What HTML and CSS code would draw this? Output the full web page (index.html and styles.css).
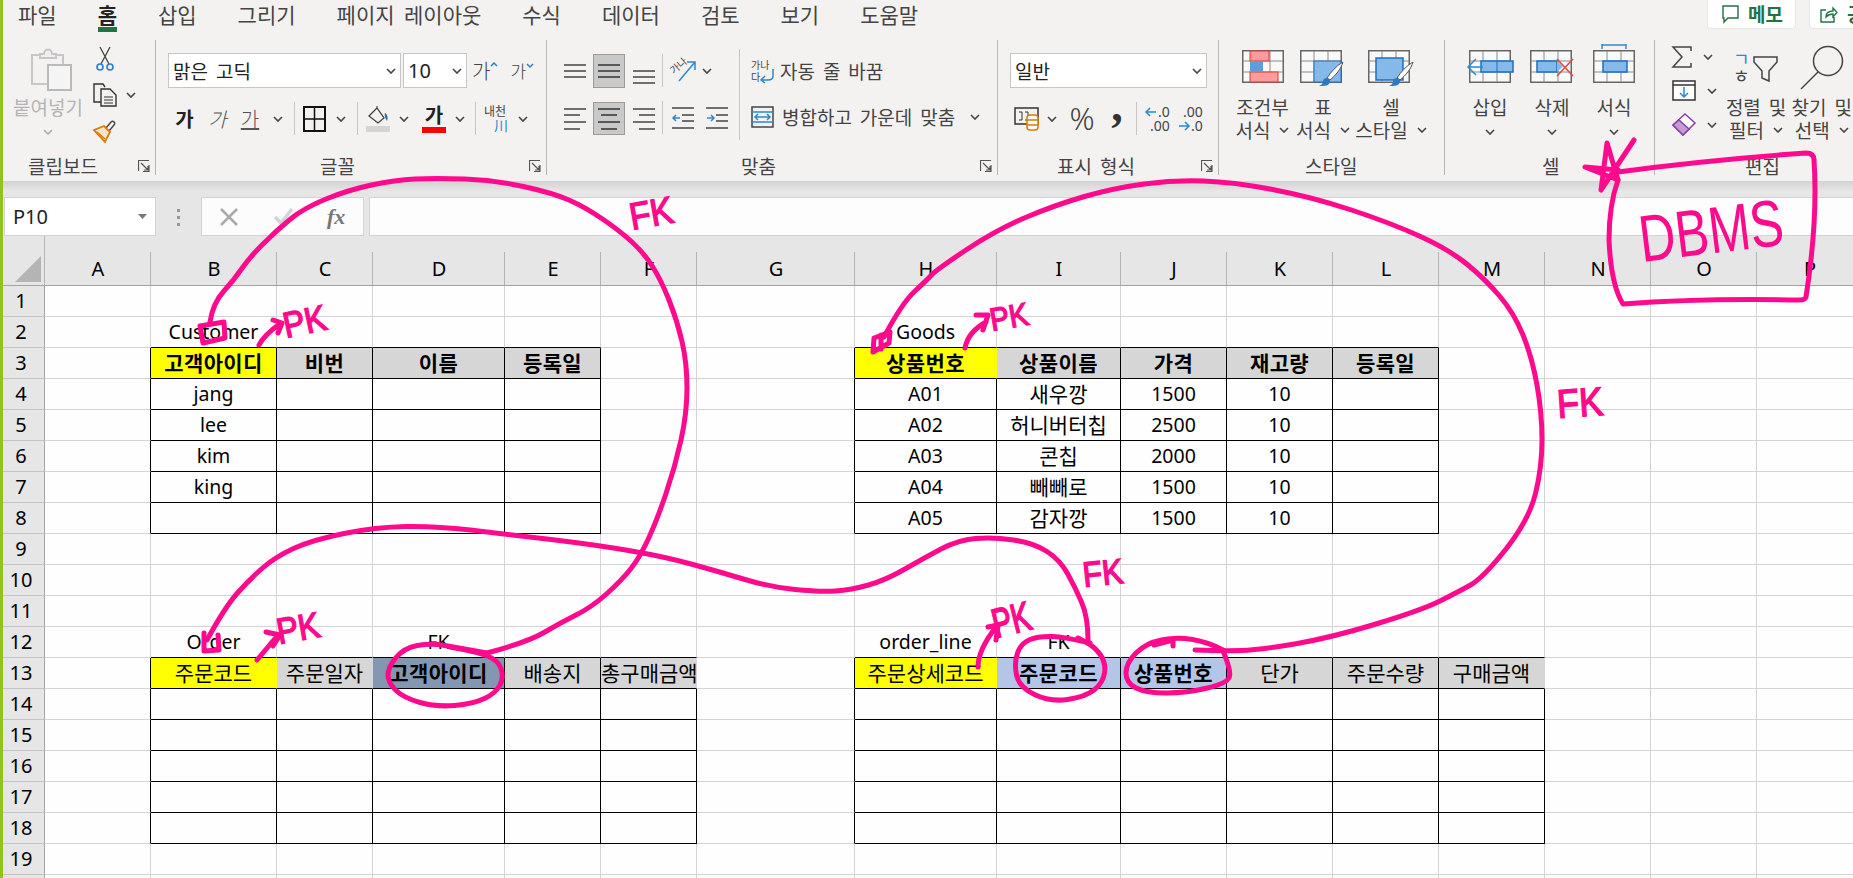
FILE: index.html
```html
<!DOCTYPE html>
<html lang="ko">
<head>
    <meta charset="UTF-8">
    <title>Excel - DB 테이블 설계</title>
    <link rel="stylesheet" href="styles.css">
</head>
<body>
<svg class="defs" width="0" height="0">
    <symbol id="chev" viewBox="0 0 10 6"><path d="M1 1l4 4 4-4" fill="none" stroke="#444" stroke-width="1.6"/></symbol>
    <symbol id="launch" viewBox="0 0 12 12"><path d="M.5 11V.5H11M11 5v6.5H5M3 3l7 7M10 6v4H6" fill="none" stroke="#555" stroke-width="1.2"/></symbol>
    <symbol id="grid" viewBox="0 0 42 33"><rect x=".75" y=".75" width="40.5" height="31.5" fill="#f9f9f9" stroke="#666" stroke-width="1.5"/><path d="M14 1v31M28 1v31M1 11h40M1 22h40" stroke="#8a8a8a" fill="none"/></symbol>
</svg>

<div class="app">
    <nav class="tabs">
        <span class="tab">파일</span>
        <span class="tab active">홈</span>
        <span class="tab">삽입</span>
        <span class="tab">그리기</span>
        <span class="tab">페이지 레이아웃</span>
        <span class="tab">수식</span>
        <span class="tab">데이터</span>
        <span class="tab">검토</span>
        <span class="tab">보기</span>
        <span class="tab">도움말</span>
        <div class="tab-actions">
            <span class="action memo">
                <svg width="17" height="18" viewBox="0 0 17 18" fill="none" stroke="#217346" stroke-width="1.4"><path d="M1 1h15v12H6l-4 4v-4H1z"/></svg>
                메모
            </span>
            <span class="action share">
                <svg width="18" height="18" viewBox="0 0 18 18" fill="none" stroke="#217346" stroke-width="1.4"><path d="M6 5H1v12h13v-5M6 12c0-4 3-6 7-6V3l4 4.500-4 4.500V9c-3 0-5 1-7 3z"/></svg>
                공유
            </span>
        </div>
    </nav>

    <section class="ribbon">
        <!-- 클립보드 -->
        <div class="group g-clip">
            <div class="g-body clip-body">
                <div class="paste">
                    <svg class="paste-icon" width="41" height="44" viewBox="0 0 41 44" fill="none" stroke="#c6c6c6" stroke-width="2"><path d="M17 37H1V8h8M25 8h7v9"/><path d="M9 11V7h4c0-6 8-6 8 0h4v4z" fill="#efefef"/><rect x="17" y="18" width="23" height="25" fill="#f4f4f4" stroke="#b9b9b9"/></svg>
                    <span class="paste-label">붙여넣기</span>
                    <svg class="chev c-muted" width="10" height="6"><use href="#chev"/></svg>
                </div>
                <div class="clip-tools">
                    <svg class="t-cut" width="18" height="24" viewBox="0 0 18 24" fill="none"><path d="M4 0l9 17M14 0L5 17" stroke="#444" stroke-width="1.3"/><circle cx="4" cy="20" r="3" stroke="#2b7cd3" stroke-width="1.6"/><circle cx="14" cy="20" r="3" stroke="#2b7cd3" stroke-width="1.6"/></svg>
                    <span class="t-copy">
                        <svg width="24" height="24" viewBox="0 0 24 24" fill="none" stroke="#333" stroke-width="1.4"><path d="M8 19H1V1h9l2 3"/><path d="M8 6h9l6 6v11H8z" fill="#f3f2f1"/><path d="M11 14h9M11 17h9M11 20h9" stroke-width="1"/></svg>
                        <svg class="chev" width="10" height="6"><use href="#chev"/></svg>
                    </span>
                    <svg class="t-paint" width="24" height="23" viewBox="0 0 24 23" fill="none"><path d="M13 9l5-6c2-2 5 1 3 3l-5 6" stroke="#444" stroke-width="1.4"/><path d="M1 11l10-4 6 6-5 10z" fill="#fbe3c6" stroke="#dc7a00" stroke-width="1.8"/><path d="M4 13l8 7" stroke="#dc7a00" stroke-width="1.5"/></svg>
                </div>
            </div>
            <div class="g-label"><span>클립보드</span><svg class="launcher" width="12" height="12"><use href="#launch"/></svg></div>
        </div>

        <!-- 글꼴 -->
        <div class="group g-font">
            <div class="g-body font-body">
                <div class="row font-row1">
                    <div class="combo combo-font"><span>맑은 고딕</span><svg width="10" height="6"><use href="#chev"/></svg></div>
                    <div class="combo combo-size"><span>10</span><svg width="10" height="6"><use href="#chev"/></svg></div>
                    <span class="grow">가<svg width="8" height="6" viewBox="0 0 8 6" fill="none" stroke="#2b7cd3" stroke-width="1.5"><path d="M1 5l3-3 3 3"/></svg></span>
                    <span class="shrink">가<svg width="8" height="6" viewBox="0 0 8 6" fill="none" stroke="#2b7cd3" stroke-width="1.5"><path d="M1 1l3 3 3-3"/></svg></span>
                </div>
                <div class="slots font-row2">
                    <b class="ch">가</b>
                    <i class="ch light">가</i>
                    <u class="ch light">가</u>
                    <svg width="10" height="6"><use href="#chev"/></svg>
                    <span class="vsep"></span>
                    <svg width="23" height="26" viewBox="0 0 23 26" fill="none" stroke="#111" stroke-width="2"><rect x="1" y="1" width="21" height="24"/><path d="M11.500 1v24M1 13h21" stroke-width="1.500"/></svg>
                    <svg width="10" height="6"><use href="#chev"/></svg>
                    <span class="vsep"></span>
                    <svg width="24" height="25" viewBox="0 0 24 25" fill="none"><path d="M3 10l8-8 7 10-6 5z" stroke="#444" stroke-width="1.300"/><path d="M11 2V0" stroke="#444"/><path d="M19 7c3 2 3 6 2 8-1-2-3-5-2-8z" fill="#1f6cb5"/><rect y="20" width="24" height="6" fill="#d4d4d4"/></svg>
                    <svg width="10" height="6"><use href="#chev"/></svg>
                    <span class="fcolor"><b>가</b><em></em></span>
                    <svg width="10" height="6"><use href="#chev"/></svg>
                    <span class="vsep"></span>
                    <span class="phon">내천<em>川</em></span>
                    <svg width="10" height="6"><use href="#chev"/></svg>
                </div>
            </div>
            <div class="g-label"><span>글꼴</span><svg class="launcher" width="12" height="12"><use href="#launch"/></svg></div>
        </div>

        <!-- 맞춤 -->
        <div class="group g-align">
            <div class="g-body align-body">
                <div class="align-grid">
                    <svg width="22" height="15" viewBox="0 0 22 15" stroke="#444" stroke-width="1.500"><path d="M0 1h22M0 7h22M0 13h22"/></svg>
                    <span class="sel"><svg width="22" height="15" viewBox="0 0 22 15" stroke="#333" stroke-width="1.500"><path d="M0 1h22M0 7h22M0 13h22"/></svg></span>
                    <svg class="a-low" width="22" height="15" viewBox="0 0 22 15" stroke="#444" stroke-width="1.500"><path d="M0 1h22M0 7h22M0 13h22"/></svg>
                    <svg width="22" height="22" viewBox="0 0 22 22" stroke="#444" stroke-width="1.500"><path d="M0 1h22M0 7h16M0 14h22M0 21h16"/></svg>
                    <span class="sel"><svg width="22" height="22" viewBox="0 0 22 22" stroke="#333" stroke-width="1.500"><path d="M0 1h22M3 7h16M0 14h22M3 21h16"/></svg></span>
                    <svg width="22" height="22" viewBox="0 0 22 22" stroke="#444" stroke-width="1.500"><path d="M0 1h22M6 7h16M0 14h22M6 21h16"/></svg>
                </div>
                <div class="align-mid">
                    <div class="mid-cell">
                        <svg class="m-orient" width="26" height="24" viewBox="0 0 26 24" fill="none"><text x="0" y="12" class="svg-small" transform="rotate(-40 6 10)">가나</text><path d="M8 22L24 3M16 3h8v8" stroke="#2b8ad0" stroke-width="1.500"/></svg>
                        <svg width="10" height="6"><use href="#chev"/></svg>
                    </div>
                    <div class="mid-cell">
                        <svg class="m-ind" width="22" height="22" viewBox="0 0 22 22" fill="none"><path d="M0 1h22M10 8h12M10 14h12M0 21h22" stroke="#444" stroke-width="1.500"/><path d="M8 11H1M4 8l-3 3 3 3" stroke="#2b8ad0" stroke-width="1.500"/></svg>
                        <svg class="m-ind" width="22" height="22" viewBox="0 0 22 22" fill="none"><path d="M0 1h22M10 8h12M10 14h12M0 21h22" stroke="#444" stroke-width="1.500"/><path d="M1 11h7M5 8l3 3-3 3" stroke="#2b8ad0" stroke-width="1.500"/></svg>
                    </div>
                </div>
                <div class="align-wide">
                    <div class="wide-row">
                        <svg width="24" height="24" viewBox="0 0 24 24" fill="none"><text x="0" y="10" class="svg-small">가나</text><text x="0" y="22" class="svg-small">다</text><path d="M22 10v7c0 3-2 4-5 4h-6M14 17l-4 4 4 3" stroke="#2b8ad0" stroke-width="1.500"/></svg>
                        <span>자동 줄 바꿈</span>
                    </div>
                    <div class="wide-row">
                        <svg width="23" height="22" viewBox="0 0 23 22" fill="none"><rect x="1" y="1" width="21" height="20" stroke="#444" stroke-width="1.500"/><path d="M1 6h21M1 16h21" stroke="#2b8ad0" stroke-width="1.500"/><path d="M4 11h15M7 8l-3 3 3 3M16 8l3 3-3 3" stroke="#2b8ad0" stroke-width="1.500"/></svg>
                        <span>병합하고 가운데 맞춤</span>
                        <svg class="wide-chev" width="10" height="6"><use href="#chev"/></svg>
                    </div>
                </div>
            </div>
            <div class="g-label"><span>맞춤</span><svg class="launcher" width="12" height="12"><use href="#launch"/></svg></div>
        </div>

        <!-- 표시 형식 -->
        <div class="group g-num">
            <div class="g-body num-body">
                <div class="combo combo-num"><span>일반</span><svg width="10" height="6"><use href="#chev"/></svg></div>
                <div class="slots num-row2">
                    <svg width="25" height="24" viewBox="0 0 25 24" fill="none"><rect x="1" y="1" width="23" height="16" stroke="#333" stroke-width="1.500"/><path d="M5 5h3v8H5M11 5h3v8h-3" stroke="#333"/><rect x="13" y="8" width="11" height="15" rx="3" fill="#fff" stroke="#dc7a00" stroke-width="1.500"/><path d="M13 13h11M13 18h11" stroke="#dc7a00" stroke-width="1.500"/></svg>
                    <svg width="10" height="6"><use href="#chev"/></svg>
                    <span class="pct">%</span>
                    <span class="comma">,</span>
                    <span class="vsep"></span>
                    <svg width="25" height="26" viewBox="0 0 25 26" fill="none"><path d="M11 6H1M5 2L1 6l4 4" stroke="#2b8ad0" stroke-width="1.500"/><text x="13" y="11" class="svg-num">.0</text><text x="5" y="25" class="svg-num">.00</text></svg>
                    <svg width="25" height="26" viewBox="0 0 25 26" fill="none"><path d="M1 20h10M7 16l4 4-4 4" stroke="#2b8ad0" stroke-width="1.500"/><text x="5" y="11" class="svg-num">.00</text><text x="13" y="25" class="svg-num">.0</text></svg>
                </div>
            </div>
            <div class="g-label"><span>표시 형식</span><svg class="launcher" width="12" height="12"><use href="#launch"/></svg></div>
        </div>

        <!-- 스타일 -->
        <div class="group g-style">
            <div class="g-body bigs style-body">
                <div class="big">
                    <div class="big-icon"><svg width="42" height="33" viewBox="0 0 42 33"><use href="#grid" width="42" height="33"/><rect x="8" y="1" width="19" height="10" fill="#ff9a9e" stroke="#d83b2b"/><rect x="8" y="22" width="28" height="10" fill="#ff9a9e" stroke="#d83b2b"/><rect x="8" y="11" width="13" height="11" fill="#5c9fdc"/></svg></div>
                    <span>조건부</span>
                    <span>서식 <svg width="10" height="6"><use href="#chev"/></svg></span>
                </div>
                <div class="big">
                    <div class="big-icon"><svg width="46" height="33" viewBox="0 0 46 33"><use href="#grid" width="42" height="33"/><rect x="14" y="11" width="27" height="21" fill="#84b9ea" stroke="#1e6fbf"/><path d="M43 12c-2 7-7 13-13 18l-3-2c4-6 9-12 16-16z" fill="#fff" stroke="#555"/><path d="M27 28c3 1 4 3 2 6-2 2-6 2-10 2 3-1 4-3 4-5 0-2 2-3 4-3z" fill="#2e78c0"/></svg></div>
                    <span>표</span>
                    <span>서식 <svg width="10" height="6"><use href="#chev"/></svg></span>
                </div>
                <div class="big">
                    <div class="big-icon"><svg width="46" height="33" viewBox="0 0 46 33"><use href="#grid" width="42" height="33"/><rect x="8" y="8" width="27" height="22" fill="#84b9ea" stroke="#1e6fbf" stroke-width="1.500"/><path d="M45 12c-2 7-7 13-13 18l-3-2c4-6 9-12 16-16z" fill="#fff" stroke="#555"/><path d="M29 28c3 1 4 3 2 6-2 2-6 2-10 2 3-1 4-3 4-5 0-2 2-3 4-3z" fill="#2e78c0"/></svg></div>
                    <span>셀</span>
                    <span>스타일 <svg width="10" height="6"><use href="#chev"/></svg></span>
                </div>
            </div>
            <div class="g-label"><span>스타일</span></div>
        </div>

        <!-- 셀 -->
        <div class="group g-cell">
            <div class="g-body bigs cell-body">
                <div class="big">
                    <div class="big-icon"><svg width="46" height="33" viewBox="0 0 46 33"><g transform="translate(2 0)"><use href="#grid" width="42" height="33"/></g><rect x="14" y="11" width="32" height="11" fill="#84b9ea" stroke="#1e6fbf" stroke-width="1.500"/><path d="M30 11v11" stroke="#1e6fbf"/><path d="M16 17H2M9 9l-8 8 8 8" fill="none" stroke="#2b8ad0" stroke-width="1.500"/></svg></div>
                    <span>삽입</span>
                    <svg width="10" height="6"><use href="#chev"/></svg>
                </div>
                <div class="big">
                    <div class="big-icon"><svg width="44" height="33" viewBox="0 0 44 33"><use href="#grid" width="42" height="33"/><rect x="7" y="11" width="20" height="11" fill="#84b9ea" stroke="#1e6fbf" stroke-width="1.500"/><path d="M27 11l6 5.500-6 5.500z" fill="#84b9ea"/><path d="M27 9l16 17M43 9L27 26" stroke="#e5493a" stroke-width="1.600" fill="none"/></svg></div>
                    <span>삭제</span>
                    <svg width="10" height="6"><use href="#chev"/></svg>
                </div>
                <div class="big">
                    <div class="big-icon"><svg width="42" height="40" viewBox="0 0 42 40"><path d="M9 1h24M9 0v5M33 0v5" transform="translate(0 1)" fill="none" stroke="#2b8ad0" stroke-width="1.500"/><g transform="translate(0 7)"><use href="#grid" width="42" height="33"/><rect x="10" y="11" width="24" height="11" fill="#84b9ea" stroke="#1e6fbf" stroke-width="1.500"/></g></svg></div>
                    <span>서식</span>
                    <svg width="10" height="6"><use href="#chev"/></svg>
                </div>
            </div>
            <div class="g-label"><span>셀</span></div>
        </div>

        <!-- 편집 -->
        <div class="group g-edit">
            <div class="g-body edit-body">
                <div class="edit-tools">
                    <span><svg width="20" height="22" viewBox="0 0 20 22" fill="none" stroke="#444" stroke-width="1.500"><path d="M19 5V1H1l9 10-9 10h18v-4"/></svg><svg width="10" height="6"><use href="#chev"/></svg></span>
                    <span><svg width="24" height="21" viewBox="0 0 24 21" fill="none"><rect x="1" y="1" width="22" height="19" fill="#fff" stroke="#333" stroke-width="1.500"/><path d="M1 5h22" stroke="#333" stroke-width="1.500"/><path d="M12 7v10M8 13l4 4 4-4" stroke="#2b8ad0" stroke-width="1.500"/></svg><svg width="10" height="6"><use href="#chev"/></svg></span>
                    <span><svg width="24" height="23" viewBox="0 0 24 23"><path d="M1 12L13 1l10 9-12 12z" fill="#fff" stroke="#8a3fa8" stroke-width="1.500"/><path d="M1 12l6-5 10 9-6 6z" fill="#c79bd6" stroke="#8a3fa8" stroke-width="1.500"/></svg><svg width="10" height="6"><use href="#chev"/></svg></span>
                </div>
                <div class="big big-sort">
                    <div class="big-icon"><svg width="44" height="33" viewBox="0 0 44 33" fill="none"><text x="-1" y="16" class="svg-sort blue">ㄱ</text><text x="-1" y="33" class="svg-sort">ㅎ</text><path d="M20 7h23v5l-8 9v10l-7-3v-7l-8-9z" stroke="#444" stroke-width="1.500"/></svg></div>
                    <span>정렬 및</span>
                    <span>필터 <svg width="10" height="6"><use href="#chev"/></svg></span>
                </div>
                <div class="big big-find">
                    <div class="big-icon tall"><svg width="44" height="43" viewBox="0 0 44 43" fill="none" stroke="#444" stroke-width="1.500"><circle cx="28" cy="15" r="14.500"/><path d="M18 26L1 43"/></svg></div>
                    <span>찾기 및</span>
                    <span>선택 <svg width="10" height="6"><use href="#chev"/></svg></span>
                </div>
            </div>
            <div class="g-label"><span>편집</span></div>
        </div>
    </section>

    <div class="formula">
        <div class="namebox"><span>P10</span><svg width="9" height="5" viewBox="0 0 9 5"><path d="M0 0h9L4.500 5z" fill="#777"/></svg></div>
        <div class="dots"><i></i><i></i><i></i></div>
        <div class="fx-box">
            <svg width="18" height="18" viewBox="0 0 18 18" fill="none" stroke="#aaa" stroke-width="2.500"><path d="M1 1l16 16M17 1L1 17"/></svg>
            <svg width="19" height="17" viewBox="0 0 19 17" fill="none" stroke="#d4d4d4" stroke-width="3.500"><path d="M1 9l6 6L18 1"/></svg>
            <span class="fx">fx</span>
        </div>
        <div class="fx-input"></div>
    </div>

    <div class="sheet-wrap">
        <table class="sheet">
            <colgroup>
                <col class="c-gut"><col class="c-106"><col class="c-b"><col class="c-96"><col class="c-d"><col class="c-96"><col class="c-96"><col class="c-g"><col class="c-h"><col class="c-i"><col class="c-106"><col class="c-106"><col class="c-106"><col class="c-106"><col class="c-106"><col class="c-106"><col class="c-106">
            </colgroup>
            <thead>
                <tr>
                    <th class="corner"><svg width="26" height="26" viewBox="0 0 26 26"><path d="M26 0v26H0z" fill="#b4b4b4"/></svg></th>
                    <th>A</th><th>B</th><th>C</th><th>D</th><th>E</th><th>F</th><th>G</th><th>H</th><th>I</th><th>J</th><th>K</th><th>L</th><th>M</th><th>N</th><th>O</th><th>P</th>
                </tr>
            </thead>
            <tbody>
                <tr><th>1</th><td></td><td></td><td></td><td></td><td></td><td></td><td></td><td></td><td></td><td></td><td></td><td></td><td></td><td></td><td></td><td></td></tr>
                <tr><th>2</th><td></td><td class="u en">Customer</td><td class="u"></td><td class="u"></td><td class="u"></td><td></td><td></td><td class="u en">Goods</td><td class="u"></td><td class="u"></td><td class="u"></td><td class="u"></td><td></td><td></td><td></td><td></td></tr>
                <tr><th>3</th><td class="l"></td><td class="t pk b">고객아이디</td><td class="t gr b">비번</td><td class="t gr b">이름</td><td class="t gr b">등록일</td><td></td><td class="l"></td><td class="t pk b nr">상품번호</td><td class="t gr b">상품이름</td><td class="t gr b">가격</td><td class="t gr b">재고량</td><td class="t gr b">등록일</td><td></td><td></td><td></td><td></td></tr>
                <tr><th>4</th><td class="l"></td><td class="t en">jang</td><td class="t"></td><td class="t"></td><td class="t"></td><td></td><td class="l"></td><td class="t en">A01</td><td class="t">새우깡</td><td class="t en">1500</td><td class="t en">10</td><td class="t"></td><td></td><td></td><td></td><td></td></tr>
                <tr><th>5</th><td class="l"></td><td class="t en">lee</td><td class="t"></td><td class="t"></td><td class="t"></td><td></td><td class="l"></td><td class="t en">A02</td><td class="t">허니버터칩</td><td class="t en">2500</td><td class="t en">10</td><td class="t"></td><td></td><td></td><td></td><td></td></tr>
                <tr><th>6</th><td class="l"></td><td class="t en">kim</td><td class="t"></td><td class="t"></td><td class="t"></td><td></td><td class="l"></td><td class="t en">A03</td><td class="t">콘칩</td><td class="t en">2000</td><td class="t en">10</td><td class="t"></td><td></td><td></td><td></td><td></td></tr>
                <tr><th>7</th><td class="l"></td><td class="t en">king</td><td class="t"></td><td class="t"></td><td class="t"></td><td></td><td class="l"></td><td class="t en">A04</td><td class="t">빼빼로</td><td class="t en">1500</td><td class="t en">10</td><td class="t"></td><td></td><td></td><td></td><td></td></tr>
                <tr><th>8</th><td class="l"></td><td class="t"></td><td class="t"></td><td class="t"></td><td class="t"></td><td></td><td class="l"></td><td class="t en">A05</td><td class="t">감자깡</td><td class="t en">1500</td><td class="t en">10</td><td class="t"></td><td></td><td></td><td></td><td></td></tr>
                <tr><th>9</th><td></td><td></td><td></td><td></td><td></td><td></td><td></td><td></td><td></td><td></td><td></td><td></td><td></td><td></td><td></td><td></td></tr>
                <tr><th>10</th><td></td><td></td><td></td><td></td><td></td><td></td><td></td><td></td><td></td><td></td><td></td><td></td><td></td><td></td><td></td><td></td></tr>
                <tr><th>11</th><td></td><td></td><td></td><td></td><td></td><td></td><td></td><td></td><td></td><td></td><td></td><td></td><td></td><td></td><td></td><td></td></tr>
                <tr><th>12</th><td></td><td class="u en">Order</td><td class="u"></td><td class="u en">FK</td><td class="u"></td><td class="u"></td><td></td><td class="u en">order_line</td><td class="u en">FK</td><td class="u"></td><td class="u"></td><td class="u"></td><td class="u"></td><td></td><td></td><td></td></tr>
                <tr><th>13</th><td class="l"></td><td class="t pk nr">주문코드</td><td class="t gr nr">주문일자</td><td class="t fk-dark b">고객아이디</td><td class="t gr">배송지</td><td class="t gr nr clip">총구매금액</td><td class="l"></td><td class="t pk nr">주문상세코드</td><td class="t fk-light b">주문코드</td><td class="t fk-light b">상품번호</td><td class="t gr">단가</td><td class="t gr">주문수량</td><td class="t gr nr">구매금액</td><td></td><td></td><td></td></tr>
                <tr><th>14</th><td class="l"></td><td class="t"></td><td class="t"></td><td class="t"></td><td class="t"></td><td class="t"></td><td class="l"></td><td class="t"></td><td class="t"></td><td class="t"></td><td class="t"></td><td class="t"></td><td class="t"></td><td></td><td></td><td></td></tr>
                <tr><th>15</th><td class="l"></td><td class="t"></td><td class="t"></td><td class="t"></td><td class="t"></td><td class="t"></td><td class="l"></td><td class="t"></td><td class="t"></td><td class="t"></td><td class="t"></td><td class="t"></td><td class="t"></td><td></td><td></td><td></td></tr>
                <tr><th>16</th><td class="l"></td><td class="t"></td><td class="t"></td><td class="t"></td><td class="t"></td><td class="t"></td><td class="l"></td><td class="t"></td><td class="t"></td><td class="t"></td><td class="t"></td><td class="t"></td><td class="t"></td><td></td><td></td><td></td></tr>
                <tr><th>17</th><td class="l"></td><td class="t"></td><td class="t"></td><td class="t"></td><td class="t"></td><td class="t"></td><td class="l"></td><td class="t"></td><td class="t"></td><td class="t"></td><td class="t"></td><td class="t"></td><td class="t"></td><td></td><td></td><td></td></tr>
                <tr><th>18</th><td class="l"></td><td class="t"></td><td class="t"></td><td class="t"></td><td class="t"></td><td class="t"></td><td class="l"></td><td class="t"></td><td class="t"></td><td class="t"></td><td class="t"></td><td class="t"></td><td class="t"></td><td></td><td></td><td></td></tr>
                <tr><th>19</th><td></td><td></td><td></td><td></td><td></td><td></td><td></td><td></td><td></td><td></td><td></td><td></td><td></td><td></td><td></td><td></td></tr>
                <tr><th>20</th><td></td><td></td><td></td><td></td><td></td><td></td><td></td><td></td><td></td><td></td><td></td><td></td><td></td><td></td><td></td><td></td></tr>
            </tbody>
        </table>
    </div>

    <!-- pen annotations drawn over the screenshot -->
    <svg class="ink" width="1853" height="878" viewBox="0 0 1853 878">
        <!-- customer -> order FK -->
        <path d="M200 326L224 322L225 338L203 343Z"/>
        <path d="M210 322Q213 303 223.500 291.500Q234 280 241.500 269Q249 258 263 244Q277 230 290.500 219Q304 208 326 199Q348 190 371.500 185Q395 180 415 179Q435 178 464.500 179Q494 180 523.500 186.500Q553 193 569 200Q585 207 602.500 219Q620 231 632 242Q644 253 652.500 266.500Q661 280 669 300Q677 320 682 341.500Q687 363 687 388Q687 413 681 440Q675 467 666 493.500Q657 520 648.500 538.500Q640 557 631 568.500Q622 580 607 593.500Q592 607 576 615Q560 623 544 632.500Q528 642 487 653"/>
        <path d="M487 653Q459 648 445 645.500Q431 643 417.500 645.500Q404 648 396 657.500Q388 667 388 675Q388 683 396 690.500Q404 698 420 702.500Q436 707 454.500 705.500Q473 704 484.500 698.500Q496 693 500 685Q504 677 501 668.500Q498 660 487.500 656Q477 652 463.500 649.500L450 647"/>
        <!-- order -> order_line FK -->
        <path d="M204 633L204 651L219 650L218 635"/>
        <path d="M207 640Q225 607 237 593.500Q249 580 262 568.500Q275 557 293.500 548.500Q312 540 344 533.500Q376 527 406 526.500Q436 526 470.500 530Q505 534 551 539.500Q597 545 631.500 551Q666 557 693 564.500Q720 572 745 579.500Q770 587 795 589.500Q820 592 835.500 591Q851 590 868.500 585Q886 580 905 569Q924 558 941 549Q958 540 975.500 538.500Q993 537 1013.500 540Q1034 543 1047 551.500Q1060 560 1067.500 573.500Q1075 587 1081.500 602Q1088 617 1088 640"/>
        <path d="M1090 643Q1065 637 1052 636.500Q1039 636 1030 639.500Q1021 643 1017.500 653Q1014 663 1016.500 675Q1019 687 1034.500 694.500Q1050 702 1067.500 699.500Q1085 697 1094 690Q1103 683 1104.500 673Q1106 663 1100.500 655Q1095 647 1086.500 642.500L1078 638"/>
        <!-- goods -> order_line FK -->
        <path d="M874 338L873 352L889 343L890 332ZM881 335L881 349"/>
        <path d="M884 337Q902 303 914.500 291.500Q927 280 931.500 275Q936 270 966 250Q996 230 1025.500 217.500Q1055 205 1084.500 196.500Q1114 188 1144 184Q1174 180 1203.500 181Q1233 182 1272.500 189.500Q1312 197 1351.500 210Q1391 223 1420.500 236.500Q1450 250 1468 265Q1486 280 1500 296.500Q1514 313 1523 335Q1532 357 1537 385Q1542 413 1542 440Q1542 467 1535.500 493.500Q1529 520 1506 549Q1483 578 1470.500 585Q1458 592 1440 601Q1422 610 1376 624Q1330 638 1294.500 644Q1259 650 1241 650.500Q1223 651 1195 650"/>
        <path d="M1223 650Q1208 642 1192.500 639.500Q1177 637 1161.500 640Q1146 643 1136 653Q1126 663 1126 673Q1126 683 1136 688Q1146 693 1166.500 693Q1187 693 1207.500 688Q1228 683 1229.500 676.500Q1231 670 1223 651M1154 645L1173 640L1173 646"/>
        <!-- PK arrows -->
        <path d="M259 345Q264 335 281 323M273 320L282 323L278 333"/>
        <path d="M965 348Q968 332 986 322M976 315L988 315L983 330"/>
        <path d="M257 660L278 635M266 632L280 635L273 646"/>
        <path d="M978 667Q978 650 996 627M988 627L998 625L996 640"/>
        <!-- star and DBMS box -->
        <path d="M1634 140L1601 190L1607 143L1618 180L1585 167L1618 170"/>
        <path d="M1618 172Q1707 160 1806 153Q1814 153 1814 160Q1818 220 1806 297Q1805 300 1800 300Q1700 298 1623 304Q1611 285 1609 240Q1609 205 1618 180"/>
        <text class="ink-t thin" transform="translate(1642 262) rotate(-7) scale(.76 1)" font-size="66">DBMS</text>
        <text class="ink-t" transform="translate(632 230) rotate(-10) scale(.9 1)" font-size="38">FK</text>
        <text class="ink-t" transform="translate(1558 418) rotate(-4) scale(.9 1)" font-size="40">FK</text>
        <text class="ink-t" transform="translate(1084 587) rotate(-6) scale(.9 1)" font-size="35">FK</text>
        <text class="ink-t" transform="translate(286 338) rotate(-12) scale(.9 1)" font-size="36">PK</text>
        <text class="ink-t" transform="translate(992 331) rotate(-10) scale(.9 1)" font-size="32">PK</text>
        <text class="ink-t" transform="translate(279 644) rotate(-10) scale(.9 1)" font-size="36">PK</text>
        <text class="ink-t" transform="translate(996 638) rotate(-14) scale(.85 1.200)" font-size="34">PK</text>
    </svg>
</div>
</body>
</html>
```

FILE: styles.css
```css
* {
    box-sizing: border-box;
}
html, body {
    margin: 0;
    height: 100%;
}
body {
    font-family: "Noto Sans", "Noto Sans CJK KR", sans-serif;
    overflow: hidden;
    background: #fff;
}
.defs {
    position: absolute;
}
svg {
    display: block;
    flex: none;
    overflow: visible;
}
.app {
    position: relative;
    width: 1853px;
    height: 878px;
    overflow: hidden;
    border-left: 3px solid #8fc31f;
    background: #f3f2f1;
}

/* tabs */
.tabs {
    display: flex;
    height: 40px;
    gap: 41px;
    padding-left: 15px;
    font-size: 21px;
    color: #444;
    word-spacing: 4px;
    overflow: hidden;
}
.tab {
    height: 32px;
    padding-top: 3px;
    line-height: 24px;
    white-space: nowrap;
}
.tab.active {
    font-weight: 700;
    color: #222;
    border-bottom: 5px solid #217346;
}
.tab-actions {
    display: flex;
    gap: 13px;
    margin-left: auto;
    margin-right: -24px;
}
.action {
    display: flex;
    flex: none;
    align-items: center;
    gap: 9px;
    height: 29px;
    padding-left: 14px;
    background: #fff;
    border: 1px solid #e6e6e6;
    border-top: 0;
    border-radius: 0 0 4px 4px;
    color: #217346;
    font-size: 19px;
    font-weight: 700;
    word-spacing: 0;
    white-space: nowrap;
}
.memo {
    width: 89px;
}
.share {
    width: 68px;
    padding-left: 10px;
}

/* ribbon */
.ribbon {
    display: flex;
    height: 141px;
    font-size: 19px;
    color: #444;
    word-spacing: 3px;
    white-space: nowrap;
}
.group {
    display: flex;
    flex-direction: column;
    height: 135px;
    border-right: 1px solid #b5b5b5;
}
.g-clip { width: 153px; }
.g-font { width: 391px; }
.g-align { width: 451px; }
.g-num { width: 221px; }
.g-style { width: 226px; }
.g-cell { width: 210px; }
.g-edit { width: 198px; border-right: 0; }
.g-body {
    height: 117px;
}
.g-label {
    display: flex;
    align-items: center;
    height: 18px;
    padding-right: 5px;
    font-size: 19px;
}
.launcher {
    margin-left: auto;
}
.g-clip .g-label span { margin-left: 25px; }
.g-font .g-label span { margin-left: 164px; }
.g-align .g-label span { margin-left: 194px; }
.g-num .g-label span { margin-left: 59px; }
.g-style .g-label span { margin-left: 86px; }
.g-cell .g-label span { margin-left: 97px; }
.g-edit .g-label span { margin-left: 90px; }

.vsep {
    display: block;
    width: 1px;
    height: 33px;
    background: #c6c6c6;
}

/* clipboard */
.clip-body {
    display: flex;
}
.paste {
    display: flex;
    flex-direction: column;
    align-items: center;
    width: 90px;
    padding-top: 7px;
    color: #b4b4b4;
}
.paste-icon {
    margin-left: 6px;
}
.paste-label {
    line-height: 23px;
    margin-top: 6px;
}
.c-muted {
    margin-top: 9px;
    opacity: .4;
}
.clip-tools {
    display: flex;
    flex-direction: column;
    padding-top: 7px;
}
.t-cut {
    margin-left: 3px;
}
.t-copy {
    display: flex;
    align-items: center;
    gap: 9px;
    margin-top: 12px;
}
.t-paint {
    margin-top: 12px;
}

/* font */
.font-body {
    padding: 13px 0 0 12px;
}
.row {
    display: flex;
    align-items: center;
}
.combo {
    display: flex;
    align-items: center;
    justify-content: space-between;
    height: 35px;
    padding: 0 4px;
    background: #fff;
    border: 1px solid #c6c6c6;
    color: #222;
}
.combo-font {
    width: 233px;
    margin-right: 2px;
}
.combo-size {
    width: 64px;
    font-size: 20px;
}
.combo-num {
    width: 197px;
}
.grow, .shrink {
    display: flex;
    font-size: 20px;
    font-weight: 300;
}
.grow {
    margin-left: 5px;
}
.shrink {
    margin-left: 12px;
    font-size: 17px;
}
.grow svg, .shrink svg {
    margin-top: 5px;
}
.slots {
    display: grid;
    align-items: center;
    justify-items: center;
    height: 33px;
    margin-top: 14px;
}
.font-row2 {
    grid-template-columns: 33px 33px 32px 24px 9px 30px 24px 9px 32px 20px 40px 12px 18px 22px 34px;
    margin-left: 0;
    font-size: 20px;
}
.ch {
    color: #222;
}
.light {
    font-weight: 300;
    color: #555;
}
.fcolor {
    display: flex;
    flex-direction: column;
    align-items: center;
    width: 24px;
    line-height: 22px;
    color: #222;
}
.fcolor em {
    display: block;
    width: 24px;
    height: 6px;
    background: #f00;
}
.phon {
    display: flex;
    flex-direction: column;
    align-items: center;
    font-size: 12px;
    line-height: 14px;
    word-spacing: 0;
}
.phon em {
    margin-left: 12px;
    font-style: normal;
    font-size: 14px;
    color: #2b8ad0;
}

/* alignment */
.align-body {
    display: flex;
    padding: 14px 0 0 9px;
}
.align-grid {
    display: grid;
    grid-template-columns: 37px 32px 37px;
    grid-template-rows: 34px 33px;
    row-gap: 14px;
    align-items: center;
    justify-items: center;
}
.sel {
    display: flex;
    align-items: center;
    justify-content: center;
    width: 32px;
    height: 100%;
    background: #c9c9c9;
    border: 1px solid #9b9b9b;
}
.a-low {
    margin-top: 12px;
}
.align-mid {
    width: 77px;
    height: 81px;
}
.mid-cell {
    display: flex;
    align-items: center;
    gap: 5px;
    height: 33px;
    padding-left: 8px;
    border-left: 1px solid #c6c6c6;
}
.mid-cell + .mid-cell {
    gap: 12px;
    margin-top: 14px;
    padding-left: 9px;
}
.align-wide {
    align-self: flex-start;
    width: 250px;
    height: 91px;
    margin-top: -5px;
    padding-left: 11px;
    border-left: 1px solid #c6c6c6;
    color: #444;
}
.wide-row {
    display: flex;
    align-items: center;
    gap: 5px;
    height: 24px;
    margin-top: 10px;
    font-size: 19px;
}
.wide-row + .wide-row {
    margin-top: 22px;
    gap: 8px;
}
.wide-chev {
    margin-left: 7px;
}
.svg-small {
    font-size: 10px;
    fill: #444;
    word-spacing: 0;
}
.svg-num {
    font-size: 14px;
    fill: #444;
    word-spacing: 0;
}

/* number */
.num-body {
    padding: 13px 0 0 12px;
}
.num-row2 {
    grid-template-columns: 32px 20px 40px 30px 8px 34px 33px;
}
.pct {
    font-size: 31px;
    font-weight: 300;
    line-height: 33px;
}
.comma {
    font-size: 46px;
    font-weight: 700;
    font-family: "Liberation Serif", serif;
    line-height: 20px;
    margin-top: -26px;
    color: #333;
}

/* big buttons: styles, cells, editing */
.bigs {
    display: grid;
    padding-left: 14px;
}
.style-body {
    grid-template-columns: 59px 62px 74px;
}
.cell-body {
    grid-template-columns: 62px 62px 62px;
}
.big {
    display: flex;
    flex-direction: column;
    align-items: center;
}
.big > span {
    display: flex;
    align-items: center;
    gap: 3px;
    height: 23px;
}
.big > span svg {
    margin-left: 6px;
}
.big-icon {
    display: flex;
    align-items: flex-end;
    height: 43px;
    margin-bottom: 12px;
}
.big-icon.tall {
    height: 49px;
    margin-bottom: 6px;
}
.big > svg {
    margin-top: 11px;
}
.edit-body {
    display: flex;
}
.edit-tools {
    display: flex;
    flex-direction: column;
    width: 72px;
    padding: 0 0 0 17px;
}
.edit-tools span {
    display: flex;
    align-items: center;
    gap: 11px;
    height: 33px;
    margin-bottom: 1px;
}
.big-sort {
    width: 62px;
}
.big-find {
    width: 64px;
    margin-left: 4px;
    overflow: visible;
}
.svg-sort {
    font-size: 18px;
    fill: #444;
}
.svg-sort.blue {
    fill: #2b8ad0;
}

/* formula bar */
.formula {
    display: flex;
    align-items: flex-start;
    height: 55px;
    padding: 16px 0 0 1px;
    background: linear-gradient(#d2d2d2, #e6e6e6 10px);
    font-size: 20px;
}
.namebox {
    display: flex;
    align-items: center;
    justify-content: space-between;
    width: 152px;
    height: 39px;
    padding: 0 8px;
    background: #fff;
    border: 1px solid #d4d4d4;
    color: #222;
}
.dots {
    display: flex;
    flex-direction: column;
    align-items: center;
    gap: 4px;
    width: 45px;
    padding-top: 12px;
}
.dots i {
    width: 3px;
    height: 3px;
    background: #999;
}
.fx-box {
    display: flex;
    align-items: center;
    gap: 36px;
    width: 163px;
    height: 39px;
    padding-left: 18px;
    background: #fcfcfc;
    border: 1px solid #d4d4d4;
}
.fx {
    font-family: "Liberation Serif", serif;
    font-style: italic;
    font-weight: 700;
    font-size: 22px;
    color: #777;
    margin-left: -2px;
}
.fx-input {
    flex: 1;
    height: 39px;
    margin-left: 5px;
    background: #fdfdfd;
    border: 1px solid #d4d4d4;
    border-right: 0;
}

/* sheet */
.sheet-wrap {
    height: 642px;
    overflow: hidden;
}
.sheet {
    width: 1860px;
    table-layout: fixed;
    border-spacing: 0;
    background: #fefefe;
    font-size: 21px;
    color: #000;
}
.c-gut { width: 42px; }
.c-96 { width: 96px; }
.c-106 { width: 106px; }
.c-b { width: 126px; }
.c-d { width: 132px; }
.c-g { width: 158px; }
.c-h { width: 142px; }
.c-i { width: 124px; }
thead th {
    height: 50px;
    padding: 15px 0 0;
    background: #e6e6e6 linear-gradient(#b4b4b4, #b4b4b4) right bottom / 1px 33px no-repeat;
    border-bottom: 1px solid #a3a3a3;
    font-size: 20px;
    font-weight: 400;
}
thead th.corner {
    padding: 0 3px 3px 0;
    background: #e6e6e6;
    border-right: 1px solid #b4b4b4;
    vertical-align: bottom;
}
.corner svg {
    margin-left: auto;
}
tbody th {
    height: 31px;
    padding: 0 5px 0 0;
    background: #e6e6e6;
    border-right: 1px solid #a3a3a3;
    border-bottom: 1px solid #c4c4c4;
    font-size: 20px;
    font-weight: 400;
    line-height: 1;
}
td {
    height: 31px;
    padding: 0;
    border-right: 1px solid #d4d4d4;
    border-bottom: 1px solid #d4d4d4;
    line-height: 1;
    text-align: center;
    white-space: nowrap;
    overflow: hidden;
}
.en {
    font-size: 19.5px;
}
td.t {
    border-right-color: #000;
    border-bottom-color: #000;
}
td.nr {
    border-right-color: transparent;
}
td.u {
    border-bottom-color: #000;
}
td.l {
    border-right-color: #000;
}
td.b {
    font-weight: 700;
    letter-spacing: .4px;
}
td.pk {
    background: #ff0;
}
td.gr {
    background: #d6d6d6;
}
td.fk-dark {
    background: #8497b0;
}
td.fk-light {
    background: #b4c6e7;
}

/* pen overlay */
.ink {
    position: absolute;
    top: 0;
    left: -3px;
    pointer-events: none;
}
.ink path {
    fill: none;
    stroke: #ff0a8c;
    stroke-width: 5;
    stroke-linecap: round;
    stroke-linejoin: round;
}
.ink-t {
    font-family: "Liberation Sans", sans-serif;
    fill: #ff0a8c;
    stroke: #ff0a8c;
    stroke-width: 1.5;
}
.ink-t.thin {
    stroke-width: 0;
}
```
